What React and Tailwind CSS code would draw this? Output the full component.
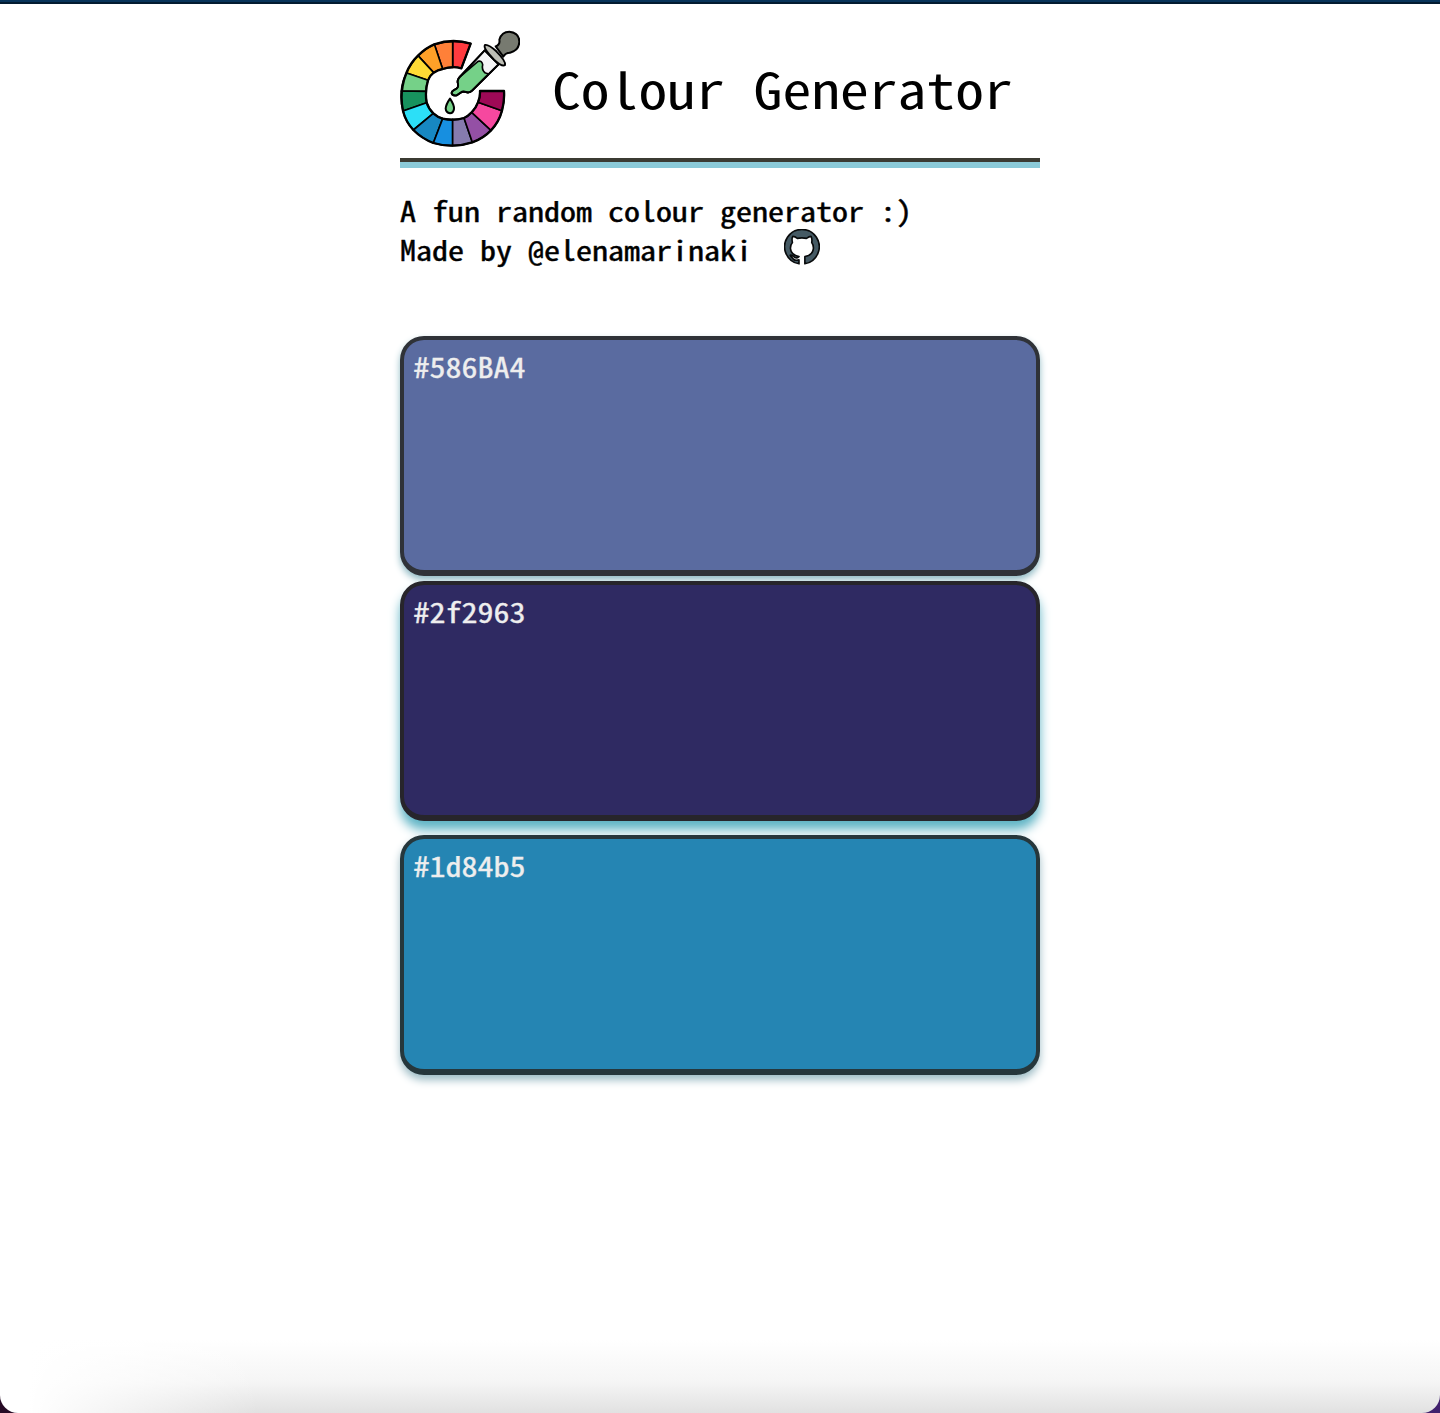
import React from "react";

const segments = [
  ["#ff3b3f", "M188 64Q216 63 242 71L214 145Q202 141 188 142Z"],
  ["#ff8038", "M188 64Q160 65 133 73L158 147Q172 142 188 142Z"],
  ["#ffa028", "M133 73Q106 86 84 107L131 158Q143 150 158 147Z"],
  ["#ffdb35", "M84 107Q62 130 50 159L114 181Q119 167 131 158Z"],
  ["#75d188", "M50 159Q36 184 34 213L108 214Q108 196 114 181Z"],
  ["#17925e", "M34 213Q31 244 39 273L110 248Q107 231 108 214Z"],
  ["#2cdff7", "M39 273Q47 305 70 330L130 280Q116 267 110 248Z"],
  ["#1788c2", "M70 330Q96 356 130 369L158 296Q142 291 130 280Z"],
  ["#178fe0", "M130 369Q158 378 188 377L188 298Q172 299 158 296Z"],
  ["#867bae", "M188 377Q218 378 247 367L222 294Q206 299 188 298Z"],
  ["#9450a5", "M247 367Q280 355 303 331L245 277Q234 289 222 294Z"],
  ["#f6489f", "M303 331Q327 306 336 272L264 247Q258 264 245 277Z"],
  ["#9e0956", "M336 272Q344 242 342 213L270 213Q271 232 264 247Z"],
];

function Logo() {
  return (
    <svg className="h-[120px] w-[120px] shrink-0" viewBox="30 30 360 360" stroke="#000" strokeWidth="5" strokeLinejoin="round" strokeLinecap="round">
      {segments.map(([fill, d]) => <path key={fill} d={d} fill={fill} />)}
      <path d="M242 71Q188 54 133 73Q106 84 84 107Q61 129 49 159Q27 216 39 273Q47 305 70 330Q96 356 130 369Q188 386 247 367Q280 355 303 331Q327 306 336 272Q344 242 342 213H270Q271 232 264 247Q258 264 245 277Q234 289 222 294Q190 304 158 296Q142 291 130 280Q116 267 110 248Q104 214 114 181Q119 167 131 158Q143 150 158 147Q187 137 214 145Z" fill="none" strokeWidth="7" />
      <path d="M284 91L326 133L246 212Q239 220 228 216Q218 213 212 218L200 226Q188 228 185 220Q184 214 196 208Q206 204 204 192Q200 181 209 171Z" fill="#f4f4f5" />
      <path d="M264 124Q276 121 278 134Q274 149 286 159Q294 160 294 164L246 212Q239 220 228 216Q218 213 212 218L200 226Q188 228 185 220Q184 214 196 208Q206 204 204 192Q200 181 209 171Z" fill="#75d188" />
      <path d="M284 91L326 133L246 212Q239 220 228 216Q218 213 212 218L200 226Q188 228 185 220Q184 214 196 208Q206 204 204 192Q200 181 209 171Z" fill="none" strokeWidth="6" />
      <path d="M317 79Q331 74 328 59Q335 35 358 35Q388 38 388 65Q387 92 360 98Q346 98 340 110Z" fill="#777a70" strokeWidth="6" />
      <path d="M285 75Q295 72 319 94Q348 123 345 135Q337 142 312 119Q278 84 285 75Z" fill="#bdbeb5" strokeWidth="6" />
      <path d="M180 236Q193 255 192 267Q190 279 180 280Q168 278 167 266Q168 253 180 236Z" fill="#75d188" strokeWidth="6" />
    </svg>
  );
}

function GithubIcon() {
  return (
    <svg className="ml-8 mt-[-3px] h-9 w-9" viewBox="42 27 108 108">
      <path d="M87 133V121Q77 124 70 119Q65 112 61 109Q58 105 65 107Q71 110 75 114Q80 117 87 111Q63 106 61 87Q60 76 67 68Q64 55 68 49Q75 49 82 55Q96 52 110 55Q118 49 124 49Q128 57 126 68Q132 76 131 87Q129 107 105 111V133A53 53 0 1 0 87 133Z" transform="translate(1.7 1.1) scale(.98)" fill="#455a64" stroke="#080a0b" strokeWidth="5" strokeLinejoin="round" />
    </svg>
  );
}

const cards = [
  ["#586BA4", "bg-[#5a6ba0] border-[#2f3238] shadow-[0_4px_7px_#91bbc5]"],
  ["#2f2963", "mt-[5px] bg-[#2f2a62] border-[#27252b] shadow-[0_9px_11px_#5fb4c5]"],
  ["#1d84b5", "mt-[14px] bg-[#2585b3] border-[#26373c] shadow-[0_5px_8px_#9dbcc5]"],
];

export default function App() {
  return (
    <div className="h-[1413px] overflow-hidden bg-[linear-gradient(to_right,#260b25,#40206d)]">
      <div className="flex h-full flex-col rounded-b-[18px] bg-white bg-[linear-gradient(to_right,white_2%,transparent_18%),linear-gradient(to_bottom,transparent_1340px,#f5f5f5_1382px,#e1e1e1_1413px)] font-['Noto_Sans_Mono_CJK_JP','Liberation_Mono',monospace] text-black">
        <div className="h-1 shrink-0 border-b-2 border-[#021c30] bg-[#07345a]" />
        <main className="mx-auto w-[640px] pt-[26px]">
          <header className="flex h-[138px] border-b-[6px] border-[#8bcad8] shadow-[inset_0_-4px_0_#3b3b33]">
            <Logo />
            <h1 className="ml-8 mt-[19px] h-[76px] origin-center scale-y-[.86] whitespace-pre text-[57.6px] leading-[76px]">Colour Generator</h1>
          </header>
          <section className="mt-[25px] whitespace-pre text-[32px] leading-[39px]">
            <p className="-translate-y-[2px] scale-y-[.87] [-webkit-text-stroke:.5px]">A fun random colour generator :)</p>
            <div className="flex h-[39px]"><span className="-translate-y-[2px] scale-y-[.87] [-webkit-text-stroke:.5px]">Made by @elenamarinaki</span><GithubIcon /></div>
          </section>
          <section className="mt-[65px]">
            {cards.map(([name, style]) => (
              <div key={name} className={`h-[240px] rounded-[24px] border-4 border-b-[6px] px-[9.5px] pt-[8px] text-[32px] leading-[39px] text-[#eeeeee] ${style}`}>
                <p className="-translate-y-[1px] scale-y-[.87] [-webkit-text-stroke:.4px]">{name}</p>
              </div>
            ))}
          </section>
        </main>
      </div>
    </div>
  );
}
